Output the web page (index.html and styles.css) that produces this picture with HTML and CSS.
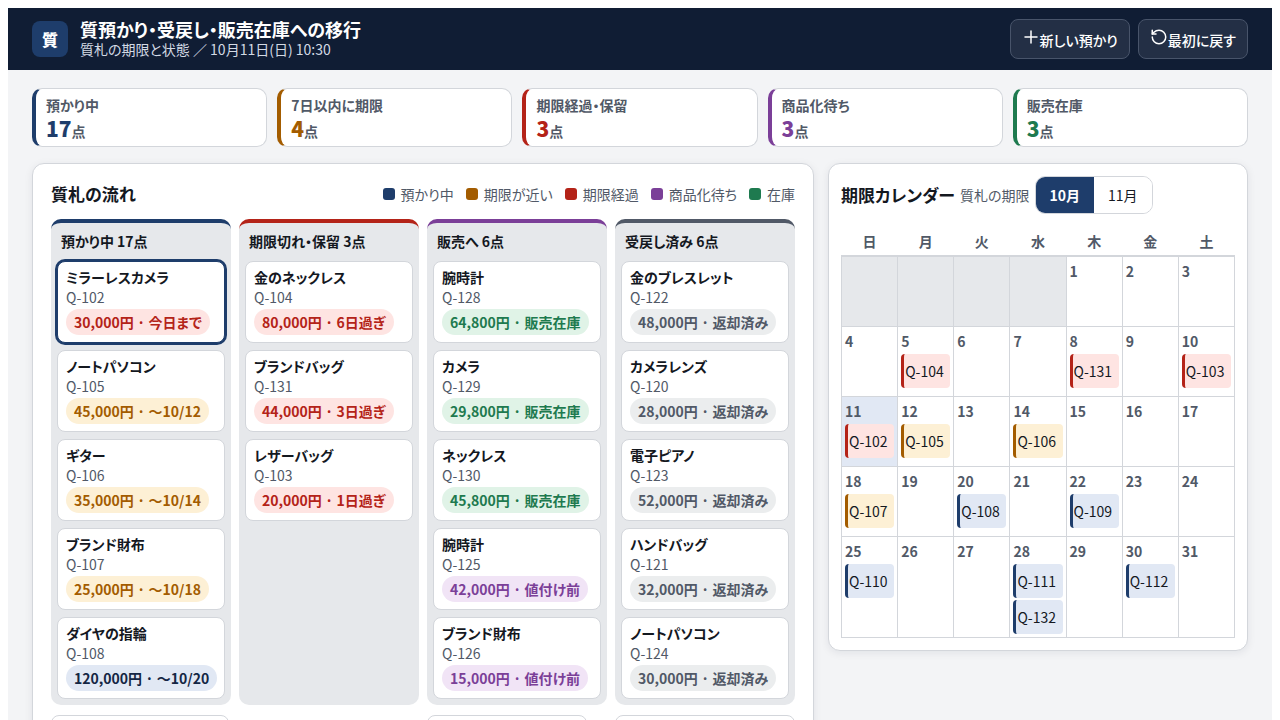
FILE: index.html
```html
<!DOCTYPE html>
<html lang="ja">
<head>
<meta charset="utf-8">
<meta name="viewport" content="width=device-width, initial-scale=1">
<title>質預かり・受戻し・販売在庫への移行</title>
<link rel="stylesheet" href="styles.css">
</head>
<body>
<div class="app">
  <header class="topbar">
    <div class="logo">質</div>
    <div class="heading">
      <h1>質預かり・受戻し・販売在庫への移行</h1>
      <p>質札の期限と状態 ／ 10月11日(日) 10:30</p>
    </div>
    <div class="actions">
      <button type="button" class="action"><svg class="icon" viewBox="0 0 24 24" aria-hidden="true"><path d="M4 12h16M12 4v16"/></svg>新しい預かり</button>
      <button type="button" class="action"><svg class="icon" viewBox="0 0 24 24" aria-hidden="true"><path d="M3 12a9 9 0 1 0 9-9 9.75 9.75 0 0 0-6.74 2.74L3 8"/><path d="M3 3v5h5"/></svg>最初に戻す</button>
    </div>
  </header>
  <main class="content">
    <section class="stats" aria-label="集計">
      <div class="stat navy"><span class="stat-label">預かり中</span><span class="stat-value"><strong>17</strong>点</span></div>
      <div class="stat amber"><span class="stat-label">7日以内に期限</span><span class="stat-value"><strong>4</strong>点</span></div>
      <div class="stat red"><span class="stat-label">期限経過・保留</span><span class="stat-value"><strong>3</strong>点</span></div>
      <div class="stat purple"><span class="stat-label">商品化待ち</span><span class="stat-value"><strong>3</strong>点</span></div>
      <div class="stat green"><span class="stat-label">販売在庫</span><span class="stat-value"><strong>3</strong>点</span></div>
    </section>
    <div class="panels">
      <section class="panel flow">
        <div class="flow-head">
          <h2>質札の流れ</h2>
          <ul class="legend">
            <li class="navy">預かり中</li>
            <li class="amber">期限が近い</li>
            <li class="red">期限経過</li>
            <li class="purple">商品化待ち</li>
            <li class="green">在庫</li>
          </ul>
        </div>
        <div class="board">
          <section class="lane navy">
            <h3>預かり中 17点</h3>
            <button type="button" class="card selected"><span class="name">ミラーレスカメラ</span><span class="code">Q-102</span><span class="pill red">30,000円 · 今日まで</span></button>
            <button type="button" class="card"><span class="name">ノートパソコン</span><span class="code">Q-105</span><span class="pill amber">45,000円 · 〜10/12</span></button>
            <button type="button" class="card"><span class="name">ギター</span><span class="code">Q-106</span><span class="pill amber">35,000円 · 〜10/14</span></button>
            <button type="button" class="card"><span class="name">ブランド財布</span><span class="code">Q-107</span><span class="pill amber">25,000円 · 〜10/18</span></button>
            <button type="button" class="card"><span class="name">ダイヤの指輪</span><span class="code">Q-108</span><span class="pill navy">120,000円 · 〜10/20</span></button>
          </section>
          <section class="lane red">
            <h3>期限切れ・保留 3点</h3>
            <button type="button" class="card"><span class="name">金のネックレス</span><span class="code">Q-104</span><span class="pill red">80,000円 · 6日過ぎ</span></button>
            <button type="button" class="card"><span class="name">ブランドバッグ</span><span class="code">Q-131</span><span class="pill red">44,000円 · 3日過ぎ</span></button>
            <button type="button" class="card"><span class="name">レザーバッグ</span><span class="code">Q-103</span><span class="pill red">20,000円 · 1日過ぎ</span></button>
          </section>
          <section class="lane purple">
            <h3>販売へ 6点</h3>
            <button type="button" class="card"><span class="name">腕時計</span><span class="code">Q-128</span><span class="pill green">64,800円 · 販売在庫</span></button>
            <button type="button" class="card"><span class="name">カメラ</span><span class="code">Q-129</span><span class="pill green">29,800円 · 販売在庫</span></button>
            <button type="button" class="card"><span class="name">ネックレス</span><span class="code">Q-130</span><span class="pill green">45,800円 · 販売在庫</span></button>
            <button type="button" class="card"><span class="name">腕時計</span><span class="code">Q-125</span><span class="pill purple">42,000円 · 値付け前</span></button>
            <button type="button" class="card"><span class="name">ブランド財布</span><span class="code">Q-126</span><span class="pill purple">15,000円 · 値付け前</span></button>
          </section>
          <section class="lane gray">
            <h3>受戻し済み 6点</h3>
            <button type="button" class="card"><span class="name">金のブレスレット</span><span class="code">Q-122</span><span class="pill gray">48,000円 · 返却済み</span></button>
            <button type="button" class="card"><span class="name">カメラレンズ</span><span class="code">Q-120</span><span class="pill gray">28,000円 · 返却済み</span></button>
            <button type="button" class="card"><span class="name">電子ピアノ</span><span class="code">Q-123</span><span class="pill gray">52,000円 · 返却済み</span></button>
            <button type="button" class="card"><span class="name">ハンドバッグ</span><span class="code">Q-121</span><span class="pill gray">32,000円 · 返却済み</span></button>
            <button type="button" class="card"><span class="name">ノートパソコン</span><span class="code">Q-124</span><span class="pill gray">30,000円 · 返却済み</span></button>
          </section>
        </div>
        <div class="more-row">
          <button type="button" class="more medium">預かり中の残り12点</button>
          <span></span>
          <button type="button" class="more short">販売への残り1点</button>
          <button type="button" class="more">受戻し済みの残り1点</button>
        </div>
      </section>
      <section class="panel calendar">
        <div class="cal-head">
          <h2>期限カレンダー</h2>
          <span class="cal-note">質札の期限</span>
          <div class="months" role="group" aria-label="表示する月">
            <button type="button" class="month current" aria-pressed="true">10月</button>
            <button type="button" class="month" aria-pressed="false">11月</button>
          </div>
        </div>
        <table class="cal">
          <thead><tr><th>日</th><th>月</th><th>火</th><th>水</th><th>木</th><th>金</th><th>土</th></tr></thead>
          <tbody>
            <tr><td class="blank"></td><td class="blank"></td><td class="blank"></td><td class="blank"></td><td><b>1</b></td><td><b>2</b></td><td><b>3</b></td></tr>
            <tr><td><b>4</b></td><td><b>5</b><button type="button" class="chip red">Q-104</button></td><td><b>6</b></td><td><b>7</b></td><td><b>8</b><button type="button" class="chip red">Q-131</button></td><td><b>9</b></td><td><b>10</b><button type="button" class="chip red">Q-103</button></td></tr>
            <tr><td class="today"><b>11</b><button type="button" class="chip red">Q-102</button></td><td><b>12</b><button type="button" class="chip amber">Q-105</button></td><td><b>13</b></td><td><b>14</b><button type="button" class="chip amber">Q-106</button></td><td><b>15</b></td><td><b>16</b></td><td><b>17</b></td></tr>
            <tr><td><b>18</b><button type="button" class="chip amber">Q-107</button></td><td><b>19</b></td><td><b>20</b><button type="button" class="chip navy">Q-108</button></td><td><b>21</b></td><td><b>22</b><button type="button" class="chip navy">Q-109</button></td><td><b>23</b></td><td><b>24</b></td></tr>
            <tr><td><b>25</b><button type="button" class="chip navy">Q-110</button></td><td><b>26</b></td><td><b>27</b></td><td><b>28</b><button type="button" class="chip navy">Q-111</button><button type="button" class="chip navy">Q-132</button></td><td><b>29</b></td><td><b>30</b><button type="button" class="chip navy">Q-112</button></td><td><b>31</b></td></tr>
          </tbody>
        </table>
      </section>
    </div>
  </main>
</div>
</body>
</html>
```
FILE: styles.css
```css
* { box-sizing: border-box; }

html { background: #fff; }

.app {
  background: #f3f4f6;
  color: #14181f;
  font-family: "Noto Sans CJK JP", sans-serif;
  font-size: 14px;
  line-height: 20px;
  font-feature-settings: "palt";
}

button { font: inherit; font-feature-settings: inherit; color: inherit; cursor: pointer; }
h1, h2, h3, p, ul { margin: 0; padding: 0; }

.navy { --tone: #1e3d6b; --tint: #e1e8f4; --ink: #142644; }
.amber { --tone: #a35c00; --tint: #fdf0d5; --ink: #a35c00; }
.red { --tone: #b42318; --tint: #fee4e2; --ink: #b42318; }
.purple { --tone: #7b3f98; --tint: #f1e4f6; --ink: #7b3f98; }
.green { --tone: #1e7a4f; --tint: #e0f3e7; --ink: #1e7a4f; }
.gray { --tone: #515967; --tint: #ebedee; --ink: #515967; }

.topbar {
  display: flex;
  align-items: center;
  gap: 12px;
  min-height: 62px;
  padding: 10px 24px;
  background: #101d34;
  color: #fff;
}
.logo {
  display: grid;
  place-items: center;
  width: 36px;
  height: 36px;
  border-radius: 8px;
  background: #1e3d6b;
  font-size: 16px;
  font-weight: 900;
}
.heading h1 { font-size: 18px; line-height: 20px; font-weight: 700; }
.heading p { color: #d3dae4; }
.actions { display: flex; gap: 8px; margin-left: auto; }
.action {
  height: 40px;
  padding: 0 11px;
  border: 1px solid #48546a;
  border-radius: 8px;
  background: #232f45;
  font-weight: 500;
}
.icon {
  width: 18px;
  height: 18px;
  fill: none;
  stroke: currentColor;
  stroke-width: 2;
  stroke-linecap: round;
  stroke-linejoin: round;
}

.content { padding: 18px 24px 24px; }
.stats { display: grid; grid-template-columns: repeat(5, 1fr); gap: 10px; }
.stat {
  display: flex;
  flex-direction: column;
  padding: 6px 10px 5px;
  border: 1px solid #d3d6db;
  border-left: 4px solid var(--tone);
  border-radius: 10px;
  background: #fff;
  color: #515967;
  font-weight: 700;
}
.stat-value { display: flex; align-items: baseline; }
.stat-value strong { color: var(--tone); font-size: 21px; line-height: 26px; }

.panels {
  display: grid;
  grid-template-columns: minmax(0, 1fr) 420px;
  align-items: start;
  gap: 14px;
  margin-top: 16px;
}
.panel {
  border: 1px solid #d3d6db;
  border-radius: 12px;
  background: #fff;
  box-shadow: 0 2px 8px rgba(16, 29, 52, 0.08);
}
.panel h2 { font-size: 17px; line-height: 24px; }

.flow { padding: 18px; }
.flow-head { display: flex; align-items: center; justify-content: space-between; }
.legend { display: flex; gap: 12px; list-style: none; color: #515967; }
.legend li { display: flex; align-items: center; gap: 6px; }
.legend li::before {
  content: "";
  width: 12px;
  height: 12px;
  border-radius: 3px;
  background: var(--tone);
}

.board { display: grid; grid-template-columns: repeat(4, minmax(0, 1fr)); gap: 8px; margin-top: 13px; }
.lane {
  display: flex;
  flex-direction: column;
  gap: 7px;
  padding: 6px;
  border-top: 4px solid var(--tone);
  border-radius: 10px;
  background: #e6e8eb;
}
.lane h3 { padding: 2px 4px 3px; font-size: 14px; line-height: 20px; }
.card {
  display: flex;
  flex-direction: column;
  align-items: flex-start;
  padding: 5px 8px 7px;
  border: 1px solid #d3d6db;
  border-radius: 8px;
  background: #fff;
  text-align: left;
}
.card.selected { border-color: #1e3d6b; box-shadow: 0 0 0 2px #1e3d6b; }
.name { font-weight: 700; }
.code { color: #515967; }
.pill {
  margin-top: 2px;
  padding: 0 8px;
  border-radius: 13px;
  background: var(--tint);
  color: var(--ink);
  line-height: 26px;
  font-weight: 700;
  white-space: nowrap;
}

.more-row { display: grid; grid-template-columns: repeat(4, minmax(0, 1fr)); gap: 8px; margin-top: 10px; }
.more {
  height: 44px;
  border: 1px solid #d3d6db;
  border-radius: 8px;
  background: #fff;
}
.more.medium { width: 178px; }
.more.short { width: 160px; }

.calendar { padding: 12px; }
.cal-head { display: flex; align-items: center; gap: 5px; }
.cal-note { color: #515967; }
.months { display: flex; overflow: hidden; border: 1px solid #d3d6db; border-radius: 10px; }
.month { height: 36px; padding: 0 14px; border: 0; background: #fff; }
.month.current { background: #1e3d6b; color: #fff; font-weight: 700; }

.cal { width: 100%; margin-top: 12px; border-collapse: collapse; table-layout: fixed; }
.cal th { height: 30px; padding: 0; border-bottom: 2px solid #d3d6db; color: #515967; }
.cal td { height: 70px; padding: 3px; border: 1px solid #d3d6db; vertical-align: top; }
.cal b { display: block; color: #515967; line-height: 22px; }
.blank { background: #e6e8eb; }
.today { background: #e1e8f4; }
.chip {
  display: block;
  width: 100%;
  height: 34px;
  margin-top: 2px;
  padding: 0 1px;
  border: 0;
  border-left: 3px solid var(--tone);
  border-radius: 4px;
  background: var(--tint);
  text-align: left;
}
```
